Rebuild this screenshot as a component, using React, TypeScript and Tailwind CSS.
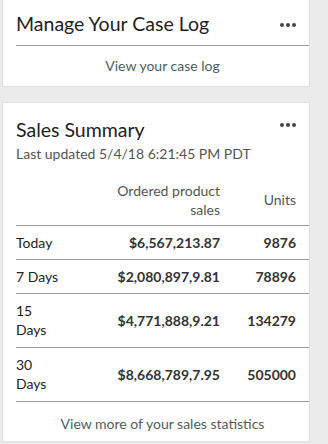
export default function App() {
  const rows = [
    { label: "Today", amount: "$6,567,213.87", units: "9876" },
    { label: "7 Days", amount: "$2,080,897,9.81", units: "78896" },
    { label: "15 Days", amount: "$4,771,888,9.21", units: "134279" },
    { label: "30 Days", amount: "$8,668,789,7.95", units: "505000" },
  ];

  return (
    <div
      className="w-[328px] h-[444px] overflow-hidden bg-[#ebebeb] text-[#222]"
      style={{ fontFamily: "Lato, 'Open Sans', sans-serif" }}
    >
      <div className="w-[308px] ml-[2px] flex flex-col gap-[15px]">
        {/* Case log card */}
        <div className="bg-white border border-[#e0e0e0] border-t-0 h-[87px] flex flex-col pl-[13px]">
          <div className="flex items-center justify-between pr-[13px] h-[46px] border-b border-[#9a9a9a] pt-[2px]">
            <h2 className="text-[19.5px] leading-none">Manage Your Case Log</h2>
            <Dots />
          </div>
          <a className="flex-1 flex items-center justify-center text-[14px] text-[#4e5e5e] pb-[1px]">
            View your case log
          </a>
        </div>

        {/* Sales summary card */}
        <div className="bg-white border border-[#e0e0e0] pl-[13px] h-[340px]">
          <div className="flex items-start justify-between pr-[13px] pt-[17px]">
            <h2 className="text-[19.5px] leading-none">Sales Summary</h2>
            <Dots />
          </div>
          <p className="text-[14px] text-[#555] mt-[7px] leading-none">Last updated 5/4/18 6:21:45 PM PDT</p>

          <div className="grid grid-cols-[46px_1fr_76px] pr-[13px] border-b border-[#9a9a9a] pt-[20px] pb-[6px] text-[14px] text-[#555] leading-[19px]">
            <div />
            <div className="w-[104px] ml-auto text-right">Ordered product sales</div>
            <div className="text-right self-center">Units</div>
          </div>

          {rows.map((r) => (
            <div
              key={r.label}
              className={`grid grid-cols-[46px_1fr_76px] items-center pr-[13px] border-b border-[#9a9a9a] text-[14px] leading-[19px] ${
                r.label.length > 6 ? "h-[54px]" : "h-[34px]"
              }`}
            >
              <div>{r.label}</div>
              <div className="text-right font-bold text-[#333]">{r.amount}</div>
              <div className="text-right font-bold text-[#333]">{r.units}</div>
            </div>
          ))}

          <a className="flex justify-center pt-[11px] text-[14px] text-[#4e5e5e]">
            View more of your sales statistics
          </a>
        </div>
      </div>
    </div>
  );
}

function Dots() {
  return (
    <div className="flex gap-[2px] mt-[3px]">
      <span className="w-[4px] h-[4px] rounded-full bg-[#444]" />
      <span className="w-[4px] h-[4px] rounded-full bg-[#444]" />
      <span className="w-[4px] h-[4px] rounded-full bg-[#444]" />
    </div>
  );
}
